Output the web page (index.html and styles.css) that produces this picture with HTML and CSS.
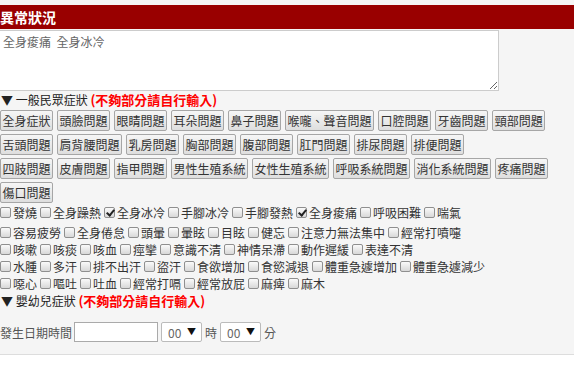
FILE: index.html
```html
<!DOCTYPE html>
<html lang="zh-Hant">
<head>
    <meta charset="UTF-8">
    <meta name="viewport" content="width=device-width, initial-scale=1.0">
    <title>異常狀況</title>
    <link rel="stylesheet" href="styles.css">
</head>
<body>
    <div class="panel">
        <h2 class="panel-title">異常狀況</h2>
        <textarea class="note">全身痠痛  全身冰冷</textarea>

        <div class="group-title">▼ 一般民眾症狀 <span class="hint">(不夠部分請自行輸入)</span></div>
        <div class="btn-rows">
            <div class="btn-row">
                <button class="sym-btn">全身症狀</button>
                <button class="sym-btn">頭臉問題</button>
                <button class="sym-btn">眼睛問題</button>
                <button class="sym-btn">耳朵問題</button>
                <button class="sym-btn">鼻子問題</button>
                <button class="sym-btn">喉嚨、聲音問題</button>
                <button class="sym-btn">口腔問題</button>
                <button class="sym-btn">牙齒問題</button>
                <button class="sym-btn">頸部問題</button>
            </div>
            <div class="btn-row">
                <button class="sym-btn">舌頭問題</button>
                <button class="sym-btn">肩背腰問題</button>
                <button class="sym-btn">乳房問題</button>
                <button class="sym-btn">胸部問題</button>
                <button class="sym-btn">腹部問題</button>
                <button class="sym-btn">肛門問題</button>
                <button class="sym-btn">排尿問題</button>
                <button class="sym-btn">排便問題</button>
            </div>
            <div class="btn-row">
                <button class="sym-btn">四肢問題</button>
                <button class="sym-btn">皮膚問題</button>
                <button class="sym-btn">指甲問題</button>
                <button class="sym-btn">男性生殖系統</button>
                <button class="sym-btn">女性生殖系統</button>
                <button class="sym-btn">呼吸系統問題</button>
                <button class="sym-btn">消化系統問題</button>
                <button class="sym-btn">疼痛問題</button>
            </div>
            <div class="btn-row">
                <button class="sym-btn">傷口問題</button>
            </div>
        </div>

        <div class="check-rows">
            <div class="check-row first">
                <label class="check"><input type="checkbox">發燒</label>
                <label class="check"><input type="checkbox">全身躁熱</label>
                <label class="check"><input type="checkbox" checked>全身冰冷</label>
                <label class="check"><input type="checkbox">手腳冰冷</label>
                <label class="check"><input type="checkbox">手腳發熱</label>
                <label class="check"><input type="checkbox" checked>全身痠痛</label>
                <label class="check"><input type="checkbox">呼吸困難</label>
                <label class="check"><input type="checkbox">喘氣</label>
            </div>
            <div class="check-row">
                <label class="check"><input type="checkbox">容易疲勞</label>
                <label class="check"><input type="checkbox">全身倦怠</label>
                <label class="check"><input type="checkbox">頭暈</label>
                <label class="check"><input type="checkbox">暈眩</label>
                <label class="check"><input type="checkbox">目眩</label>
                <label class="check"><input type="checkbox">健忘</label>
                <label class="check"><input type="checkbox">注意力無法集中</label>
                <label class="check"><input type="checkbox">經常打噴嚏</label>
            </div>
            <div class="check-row">
                <label class="check"><input type="checkbox">咳嗽</label>
                <label class="check"><input type="checkbox">咳痰</label>
                <label class="check"><input type="checkbox">咳血</label>
                <label class="check"><input type="checkbox">痙攣</label>
                <label class="check"><input type="checkbox">意識不清</label>
                <label class="check"><input type="checkbox">神情呆滯</label>
                <label class="check"><input type="checkbox">動作遲緩</label>
                <label class="check"><input type="checkbox">表達不清</label>
            </div>
            <div class="check-row">
                <label class="check"><input type="checkbox">水腫</label>
                <label class="check"><input type="checkbox">多汗</label>
                <label class="check"><input type="checkbox">排不出汗</label>
                <label class="check"><input type="checkbox">盜汗</label>
                <label class="check"><input type="checkbox">食欲增加</label>
                <label class="check"><input type="checkbox">食慾減退</label>
                <label class="check"><input type="checkbox">體重急遽增加</label>
                <label class="check"><input type="checkbox">體重急遽減少</label>
            </div>
            <div class="check-row">
                <label class="check"><input type="checkbox">噁心</label>
                <label class="check"><input type="checkbox">嘔吐</label>
                <label class="check"><input type="checkbox">吐血</label>
                <label class="check"><input type="checkbox">經常打嗝</label>
                <label class="check"><input type="checkbox">經常放屁</label>
                <label class="check"><input type="checkbox">麻痺</label>
                <label class="check"><input type="checkbox">麻木</label>
            </div>
        </div>

        <div class="group-title">▼ 嬰幼兒症狀 <span class="hint">(不夠部分請自行輸入)</span></div>

        <div class="date-row">
            <span class="date-label">發生日期時間</span>
            <input type="text" class="date-input">
            <span class="select-wrap"><select class="time-select"><option>00</option></select></span>
            <span>時</span>
            <span class="select-wrap"><select class="time-select"><option>00</option></select></span>
            <span>分</span>
        </div>
    </div>
</body>
</html>
```

FILE: styles.css
```css
/* Base */
* {
    margin: 0;
    padding: 0;
    box-sizing: border-box;
}

body {
    font-family: "Noto Sans CJK TC", "Noto Sans", sans-serif;
    font-size: 12px;
    color: #333;
    background: #fff;
}

/* Panel */
.panel {
    background: #f5f5f5;
    padding-top: 5px;
    padding-bottom: 12px;
    border-bottom: 1px solid #ddd;
}

.panel-title {
    background: #990000;
    color: #fff;
    font-size: 14px;
    font-weight: bold;
    line-height: 24px;
    height: 24px;
}

.note {
    display: block;
    width: 500px;
    height: 61px;
    margin: 1px 0 0 -1px;
    padding: 3px 3px;
    border: 1px solid #ccc;
    background: #fff;
    color: #666;
    font-family: inherit;
    font-size: 12px;
    line-height: 15px;
    outline: none;
}

/* Group headings */
.group-title {
    height: 18px;
    line-height: 18px;
    color: #222;
    padding-left: 1px;
}

.hint {
    color: #f00;
    font-weight: bold;
    font-size: 13px;
}

/* Symptom buttons */
.btn-rows {
    display: flex;
    flex-direction: column;
    gap: 3px;
    margin-top: 1px;
}

.btn-row {
    display: flex;
    gap: 4px;
}

.sym-btn {
    font-family: inherit;
    font-size: 12px;
    line-height: 15px;
    padding: 2px 1.5px;
    color: #333;
    background: linear-gradient(#f6f6f6, #dedede);
    border: 1px solid #a6a6a6;
    border-radius: 2px;
    white-space: nowrap;
}

/* Checkboxes */
.check-rows {
    margin-top: 1px;
}

.check-row {
    display: flex;
    gap: 3px;
    height: 17px;
    line-height: 17px;
}

.check-row.first {
    margin-bottom: 3px;
}

.check {
    display: flex;
    align-items: center;
    white-space: nowrap;
}

.check input {
    appearance: none;
    -webkit-appearance: none;
    width: 11px;
    height: 11px;
    margin: 0 2px 0 0;
    border: 1px solid #8f8f8f;
    border-radius: 2px;
    background: linear-gradient(#fafafa, #d8d8d8);
    position: relative;
}

.check input:checked::after {
    content: "";
    position: absolute;
    left: 3px;
    top: 0;
    width: 3px;
    height: 6px;
    border: solid #222;
    border-width: 0 2px 2px 0;
    transform: rotate(40deg);
}

/* Date row */
.date-row {
    display: flex;
    align-items: center;
    gap: 3px;
    margin-top: 12px;
    height: 20px;
    color: #555;
}

.date-label {
    margin-right: -1px;
}

.date-input {
    width: 84px;
    height: 20px;
    border: 1px solid #aaa;
    background: #fff;
    outline: none;
}

.select-wrap {
    position: relative;
    display: inline-block;
}

.select-wrap::after {
    content: "▼";
    position: absolute;
    right: 6px;
    top: 3px;
    font-size: 9px;
    line-height: 14px;
    color: #111;
    pointer-events: none;
}

.time-select {
    appearance: none;
    -webkit-appearance: none;
    width: 41px;
    height: 20px;
    padding-left: 6px;
    border: 1px solid #bbb;
    border-radius: 2px;
    background: #fff;
    color: #666;
    font-family: inherit;
    font-size: 12px;
}
```
